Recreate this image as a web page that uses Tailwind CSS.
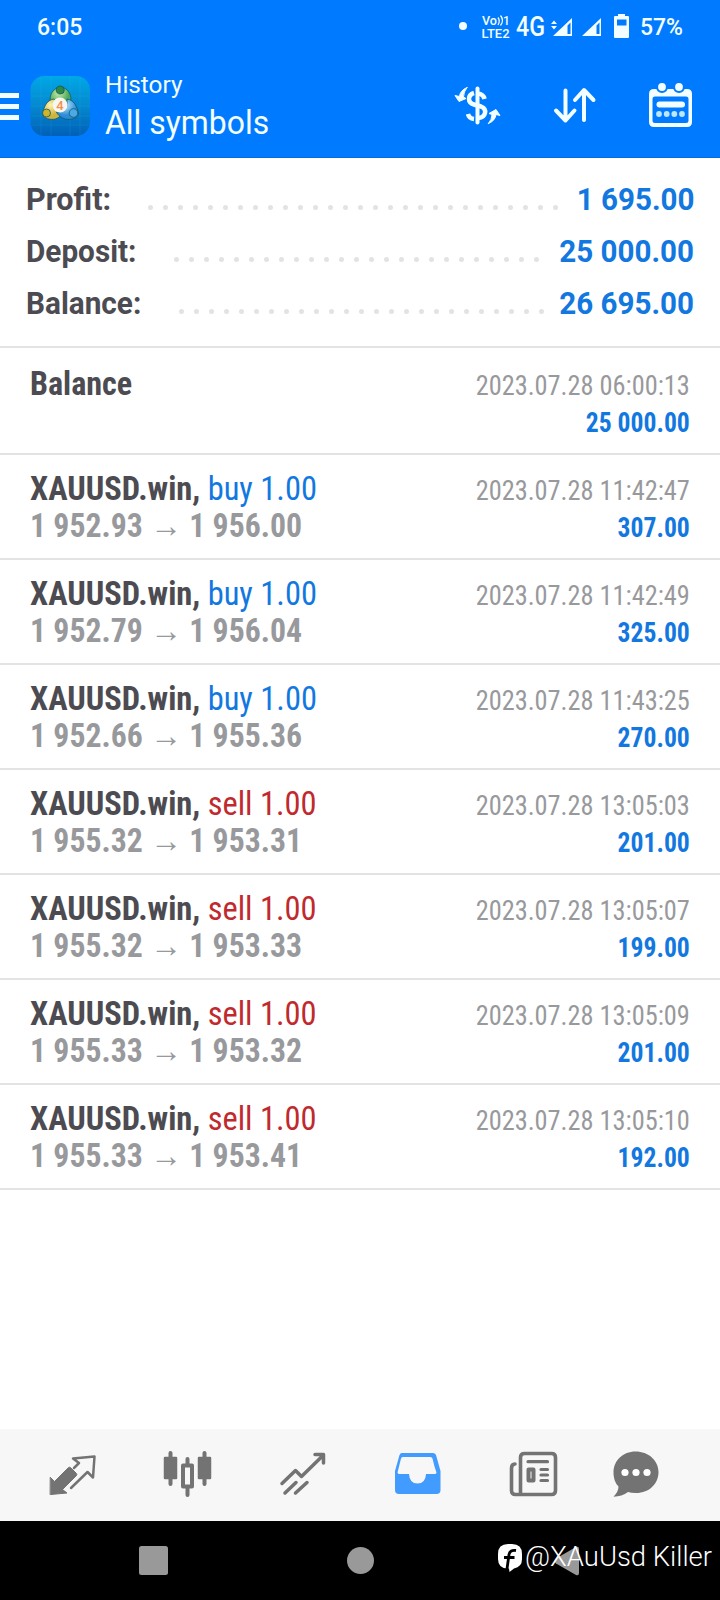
<!DOCTYPE html>
<html lang="en">
<head>
<meta charset="utf-8">
<title>History</title>
<script src="https://cdn.jsdelivr.net/npm/@tailwindcss/browser@4"></script>
</head>
<body class="w-[720px] h-[1600px] overflow-hidden bg-white font-[Roboto,sans-serif] text-[#4c4b51] flex flex-col">

<header class="h-[158px] shrink-0 bg-[#007aff] border-b border-[#0a6be0] text-[#f2feff] flex flex-col">
  <div class="h-[54px] flex items-center pl-[37px]">
    <span class="text-[23px] font-medium leading-none w-[422px]">6:05</span>
    <svg class="w-[261px] h-[54px]" viewBox="459 0 261 54" fill="#f2feff">
      <circle cx="463" cy="26" r="4"/>
      <g font-family="Roboto" font-weight="500">
        <text x="482" y="25" font-size="12" textLength="15" lengthAdjust="spacingAndGlyphs">Vo</text>
        <text x="503" y="25" font-size="12">1</text>
        <text x="481.500" y="37.500" font-size="13" textLength="28" lengthAdjust="spacingAndGlyphs">LTE2</text>
        <text x="516" y="36" font-size="27" textLength="29" lengthAdjust="spacingAndGlyphs">4G</text>
        <text x="640" y="35" font-size="23" textLength="43" lengthAdjust="spacingAndGlyphs">57%</text>
      </g>
      <path d="M498 17.500q2.500 3.500 0 7.500M500.500 15.500q4 5 0 10" fill="none" stroke="#f2feff" stroke-width="1.300"/>
      <path d="M551 24l3-3.500 3 3.500zM551 26l3 3.500 3-3.500z"/>
      <path fill-rule="evenodd" d="M572 18v18h-19zM570.500 22.500v11.500h-3v-8.500z"/>
      <path fill-rule="evenodd" d="M601 18v18h-19zM599.500 22.500v11.500h-3v-8.500z"/>
      <path fill-rule="evenodd" d="M618 14h7v2h3q1 0 1 1v20q0 1-1 1h-13q-1 0-1-1v-20q0-1 1-1h3zM617 19.500v6h9.500v-6z"/>
    </svg>
  </div>
  <div class="h-[103px] flex">
    <svg class="w-[105px] h-[103px]" viewBox="0 54 105 103">
      <defs>
        <linearGradient id="tile" x1="0" y1="0" x2="0" y2="1"><stop offset="0" stop-color="#00a8e6"/><stop offset=".5" stop-color="#0588cf"/><stop offset="1" stop-color="#0060b8"/></linearGradient>
        <radialGradient id="gr" cx=".4" cy=".3"><stop offset="0" stop-color="#c4eaa8"/><stop offset="1" stop-color="#4cab58"/></radialGradient>
        <radialGradient id="ye" cx=".4" cy=".3"><stop offset="0" stop-color="#fdf5b0"/><stop offset="1" stop-color="#cdb53c"/></radialGradient>
        <radialGradient id="bl" cx=".4" cy=".3"><stop offset="0" stop-color="#bcebff"/><stop offset="1" stop-color="#2c8cd6"/></radialGradient>
      </defs>
      <path d="M0 95.500h19M0 106.500h19M0 117.500h19" stroke="#f2feff" stroke-width="5"/>
      <rect x="30.500" y="76" width="59.500" height="60" rx="14" fill="url(#tile)"/>
      <path d="M31 96h59M31 106h59M31 116h59M31 125h59M41 76v60M51 76v60M70 76v60M80 76v60" stroke="#3ec4f0" stroke-opacity=".12"/>
      <g stroke="#14566e" stroke-width=".8">
        <path d="M60.500 87c7 1 10.500 6 10.500 13-1 6-5 8-10.500 8s-10-2-10.500-8c0-7 4-12 10.500-13z" fill="url(#gr)"/>
        <path d="M54 99c-7 1-10 7-11.500 15 1.500 5 8 6 13 5 5-2 7-5 6-10z" fill="url(#ye)"/>
        <path d="M67 99c7 1 10 7 11.500 15-1.500 5-8 6-13 5-4-1-8-4-9-7 5 0 9-2 10.500-6z" fill="url(#bl)"/>
        <circle cx="60.300" cy="90" r="4" fill="#2d8a3e"/>
        <circle cx="46.500" cy="113" r="4" fill="#cdb62c"/>
        <circle cx="73.500" cy="113" r="4.300" fill="#4ba9e4"/>
      </g>
      <circle cx="60" cy="105" r="7.500" fill="#f7f6f3"/>
      <text x="60" y="109.500" font-family="Roboto" font-weight="500" font-size="13" text-anchor="middle" fill="#f0914e">4</text>
    </svg>
    <div class="w-[335px] pt-[16px]">
      <div class="text-[24px] leading-[30px] origin-left scale-x-[1.015]">History</div>
      <div class="text-[32.500px] leading-[46px] origin-left scale-x-[.982]">All symbols</div>
    </div>
    <svg class="w-[280px] h-[103px]" viewBox="440 54 280 103" fill="none" stroke="#f2feff" stroke-linecap="round" stroke-linejoin="round">
      <path d="M477.500 88.500v34" stroke-width="4"/>
      <path d="M484.500 99q-1-5-7-5.500M474 93q-5 1.500-5 6 0 4 5 5.500l7 2q5 2 4 6.500-1 4.500-6.500 5M468 114q1 4.500 6 5" stroke-width="4.500" stroke-linecap="butt"/>
      <path d="M467 87.500q-7 3-7.500 9l-4.500-1 4 6 7-3-2.500-1.500q0-5 3.500-9.500zM488.500 123.500q7-3 7.500-9l4 1-4-6-7 4 3 1q0 5-3.500 9z" fill="#f2feff" stroke-width="1"/>
      <path d="M565.500 90.500v30M556 110.500l9.500 10 9-10M584 120v-29M575 100l9-10 9.500 10" stroke-width="4"/>
      <path d="M654 89q-5 0-5 5v28q0 5 5 5h33q5 0 5-5v-28q0-5-5-5zM655 96.500h31q2.500 0 2.500 2.500v21.500q0 2.500-2.500 2.500h-31q-2.500 0-2.500-2.500v-21.500q0-2.500 2.500-2.500z" fill="#f2feff" fill-rule="evenodd" stroke="none"/>
      <g fill="#f2feff" stroke="#007aff" stroke-width="2.200"><circle cx="662" cy="87" r="5"/><circle cx="679" cy="87" r="5"/></g>
      <path d="M659.500 104.500h22.500" stroke-width="6"/>
      <g fill="#bfe6ff" stroke="none"><circle cx="659" cy="114" r="2.900"/><circle cx="666.700" cy="114" r="2.900"/><circle cx="674.300" cy="114" r="2.900"/><circle cx="682" cy="114" r="2.900"/></g>
    </svg>
  </div>
</header>

<section class="h-[190px] shrink-0 border-b-2 border-[#e3e3e4] pt-[16px] px-[26px] text-[30.500px] leading-[52px] font-bold">
  <div class="flex h-[52px]"><span class="w-[122px]"><span class="inline-block origin-left">Profit:</span></span><svg class="h-[52px] min-w-0 flex-1 overflow-visible"><path d="M2.500 33.500h405.500" stroke="#e3e3e4" stroke-width="5" stroke-linecap="round" stroke-dasharray="0 15"/></svg><span class="text-[#1278e0] origin-right scale-x-[.97]">1 695.00</span></div>
  <div class="flex h-[52px]"><span class="w-[148px]"><span class="inline-block origin-left scale-x-[.975]">Deposit:</span></span><svg class="h-[52px] min-w-0 flex-1 overflow-visible"><path d="M2.500 33.500h360.500" stroke="#e3e3e4" stroke-width="5" stroke-linecap="round" stroke-dasharray="0 15"/></svg><span class="text-[#1278e0] origin-right scale-x-[.97]">25 000.00</span></div>
  <div class="flex h-[52px]"><span class="w-[153px]"><span class="inline-block origin-left scale-x-[.975]">Balance:</span></span><svg class="h-[52px] min-w-0 flex-1 overflow-visible"><path d="M2.500 33.500h360.500" stroke="#e3e3e4" stroke-width="5" stroke-linecap="round" stroke-dasharray="0 15"/></svg><span class="text-[#1278e0] origin-right scale-x-[.97]">26 695.00</span></div>
</section>

<main class="flex-1 font-['Roboto_Condensed',Roboto,sans-serif] [font-stretch:75%] leading-[37px] text-[34px] whitespace-nowrap">
  <div class="h-[107px] border-b-2 border-[#e3e3e4] flex justify-between pt-[17px] px-[30px]">
    <div class="font-bold origin-left scale-x-[.943]">Balance</div>
    <div class="text-right text-[28px] pt-[2px]"><div class="text-[#98999c] origin-right scale-x-[.94]">2023.07.28 06:00:13</div><div class="font-bold text-[#1278e0] origin-right scale-x-[.915]">25 000.00</div></div>
  </div>
  <div class="h-[105px] border-b-2 border-[#e3e3e4] flex justify-between pt-[15px] px-[30px]">
    <div><div class="origin-left scale-x-[.954]"><b>XAUUSD.win,</b> <span class="text-[#1278e0]">buy 1.00</span></div><div class="font-bold text-[#98999c] origin-left scale-x-[.934]">1 952.93 → 1 956.00</div></div>
    <div class="text-right text-[28px] pt-[2px]"><div class="text-[#98999c] origin-right scale-x-[.94]">2023.07.28 11:42:47</div><div class="font-bold text-[#1278e0] origin-right scale-x-[.915]">307.00</div></div>
  </div>
  <div class="h-[105px] border-b-2 border-[#e3e3e4] flex justify-between pt-[15px] px-[30px]">
    <div><div class="origin-left scale-x-[.954]"><b>XAUUSD.win,</b> <span class="text-[#1278e0]">buy 1.00</span></div><div class="font-bold text-[#98999c] origin-left scale-x-[.934]">1 952.79 → 1 956.04</div></div>
    <div class="text-right text-[28px] pt-[2px]"><div class="text-[#98999c] origin-right scale-x-[.94]">2023.07.28 11:42:49</div><div class="font-bold text-[#1278e0] origin-right scale-x-[.915]">325.00</div></div>
  </div>
  <div class="h-[105px] border-b-2 border-[#e3e3e4] flex justify-between pt-[15px] px-[30px]">
    <div><div class="origin-left scale-x-[.954]"><b>XAUUSD.win,</b> <span class="text-[#1278e0]">buy 1.00</span></div><div class="font-bold text-[#98999c] origin-left scale-x-[.934]">1 952.66 → 1 955.36</div></div>
    <div class="text-right text-[28px] pt-[2px]"><div class="text-[#98999c] origin-right scale-x-[.94]">2023.07.28 11:43:25</div><div class="font-bold text-[#1278e0] origin-right scale-x-[.915]">270.00</div></div>
  </div>
  <div class="h-[105px] border-b-2 border-[#e3e3e4] flex justify-between pt-[15px] px-[30px]">
    <div><div class="origin-left scale-x-[.954]"><b>XAUUSD.win,</b> <span class="text-[#c02a2e]">sell 1.00</span></div><div class="font-bold text-[#98999c] origin-left scale-x-[.934]">1 955.32 → 1 953.31</div></div>
    <div class="text-right text-[28px] pt-[2px]"><div class="text-[#98999c] origin-right scale-x-[.94]">2023.07.28 13:05:03</div><div class="font-bold text-[#1278e0] origin-right scale-x-[.915]">201.00</div></div>
  </div>
  <div class="h-[105px] border-b-2 border-[#e3e3e4] flex justify-between pt-[15px] px-[30px]">
    <div><div class="origin-left scale-x-[.954]"><b>XAUUSD.win,</b> <span class="text-[#c02a2e]">sell 1.00</span></div><div class="font-bold text-[#98999c] origin-left scale-x-[.934]">1 955.32 → 1 953.33</div></div>
    <div class="text-right text-[28px] pt-[2px]"><div class="text-[#98999c] origin-right scale-x-[.94]">2023.07.28 13:05:07</div><div class="font-bold text-[#1278e0] origin-right scale-x-[.915]">199.00</div></div>
  </div>
  <div class="h-[105px] border-b-2 border-[#e3e3e4] flex justify-between pt-[15px] px-[30px]">
    <div><div class="origin-left scale-x-[.954]"><b>XAUUSD.win,</b> <span class="text-[#c02a2e]">sell 1.00</span></div><div class="font-bold text-[#98999c] origin-left scale-x-[.934]">1 955.33 → 1 953.32</div></div>
    <div class="text-right text-[28px] pt-[2px]"><div class="text-[#98999c] origin-right scale-x-[.94]">2023.07.28 13:05:09</div><div class="font-bold text-[#1278e0] origin-right scale-x-[.915]">201.00</div></div>
  </div>
  <div class="h-[105px] border-b-2 border-[#e3e3e4] flex justify-between pt-[15px] px-[30px]">
    <div><div class="origin-left scale-x-[.954]"><b>XAUUSD.win,</b> <span class="text-[#c02a2e]">sell 1.00</span></div><div class="font-bold text-[#98999c] origin-left scale-x-[.934]">1 955.33 → 1 953.41</div></div>
    <div class="text-right text-[28px] pt-[2px]"><div class="text-[#98999c] origin-right scale-x-[.94]">2023.07.28 13:05:10</div><div class="font-bold text-[#1278e0] origin-right scale-x-[.915]">192.00</div></div>
  </div>
</main>

<nav class="h-[92px] shrink-0 bg-[#f7f7f7]">
  <svg class="w-[720px] h-[92px]" viewBox="0 1429 720 92" fill="none" stroke="#737373" stroke-linecap="round" stroke-linejoin="round">
    <path d="M50.500 1477.500l4 4 14-14q1-.7 2 0l6 6q.7 1 0 2l-14 14 4.500 3.500-16.500 1.500z" fill="#737373" stroke-width="1"/>
    <path d="M74 1468l5-5-6-4.500 21.500-2-1.500 21-5.500-5.500-16.500 16" stroke-width="2.500"/>
    <path d="M170.500 1453v31M204.500 1453v31M187.500 1459v36" stroke-width="4"/>
    <path d="M165 1458h11v20h-11zM199 1458h11v20h-11z" fill="#737373" stroke-width="2.500"/>
    <path d="M183 1465.500h9v21h-9z" fill="#f7f7f7" stroke-width="4"/>
    <path d="M282 1483.500l13.500-13 6 6 22-21.500M315 1454.500h8.500v8.500M285 1493l11-10.500M295.500 1493l11.500-10.500" stroke-width="3.500"/>
    <path d="M401.500 1453h31.500q2 0 3 2l4.500 16v19q0 4-4 4h-37.500q-4 0-4-4v-19l4.500-16q1-2 2-2zM402.500 1457q-1 .2-1.500 1.500l-2 8-1.500 6q.3 1.500 2 1.500h9.500q.5 9.500 8.500 9.500t8.500-9.500h8.500q2 0 2-1.500l-2-6-2-8q-.5-1.300-2-1.500z" fill="#429bff" fill-rule="evenodd" stroke="none"/>
    <path d="M520.500 1494.500v-37q0-4 4-4h27q4 0 4 4v33q0 4-4 4h-36q-4 0-4-4v-22q0-4.500 3.500-4.500" stroke-width="3.600"/>
    <path d="M528 1461.700h19.500M541 1469.500h6.500M541 1475h6.500M541 1480.500h6.500" stroke-width="3.200"/>
    <path d="M528.500 1469.500h5v11h-5z" stroke-width="4"/>
    <path d="M635.500 1451.500c13 0 23 9 23 20.500s-9 21-22.500 21q-5 0-8-1-6 4.500-14.500 4.700 5-5 5-10.200c-3-3-5-8-5-14 0-12 9.500-21 22-21z" fill="#737373" stroke="none"/>
    <g fill="#fff" stroke="none"><circle cx="625" cy="1472.500" r="3.600"/><circle cx="636" cy="1472.500" r="3.600"/><circle cx="647" cy="1472.500" r="3.600"/></g>
  </svg>
</nav>
<footer class="h-[79px] shrink-0 bg-black">
  <svg class="w-[720px] h-[79px]" viewBox="0 1521 720 79" fill="#999">
    <rect x="139" y="1546" width="29" height="29" rx="2.500"/>
    <circle cx="360.500" cy="1560.500" r="13.500"/>
    <path d="M556 1558.500l20-11.500q3-1 3 2v24q0 3-3 2l-20-11.500q-3-2.500 0-5z"/>
    <path d="M508 1544h4q10 0 10 10v5q0 8-8 9.500l-4.500 3.500-.5-3.500h-1q-10 0-10-9.500v-5q0-10 10-10z" fill="#fff"/>
    <path d="M516 1550.500q-6-1-7 4l-2 14.500M504 1557.500h10.500" fill="none" stroke="#000" stroke-width="2.800"/>
    <text x="525" y="1565.700" font-family="Roboto" font-size="28.500" font-weight="350" fill="#fff" textLength="187" lengthAdjust="spacingAndGlyphs">@XAuUsd Killer</text>
  </svg>
</footer>
</body>
</html>
